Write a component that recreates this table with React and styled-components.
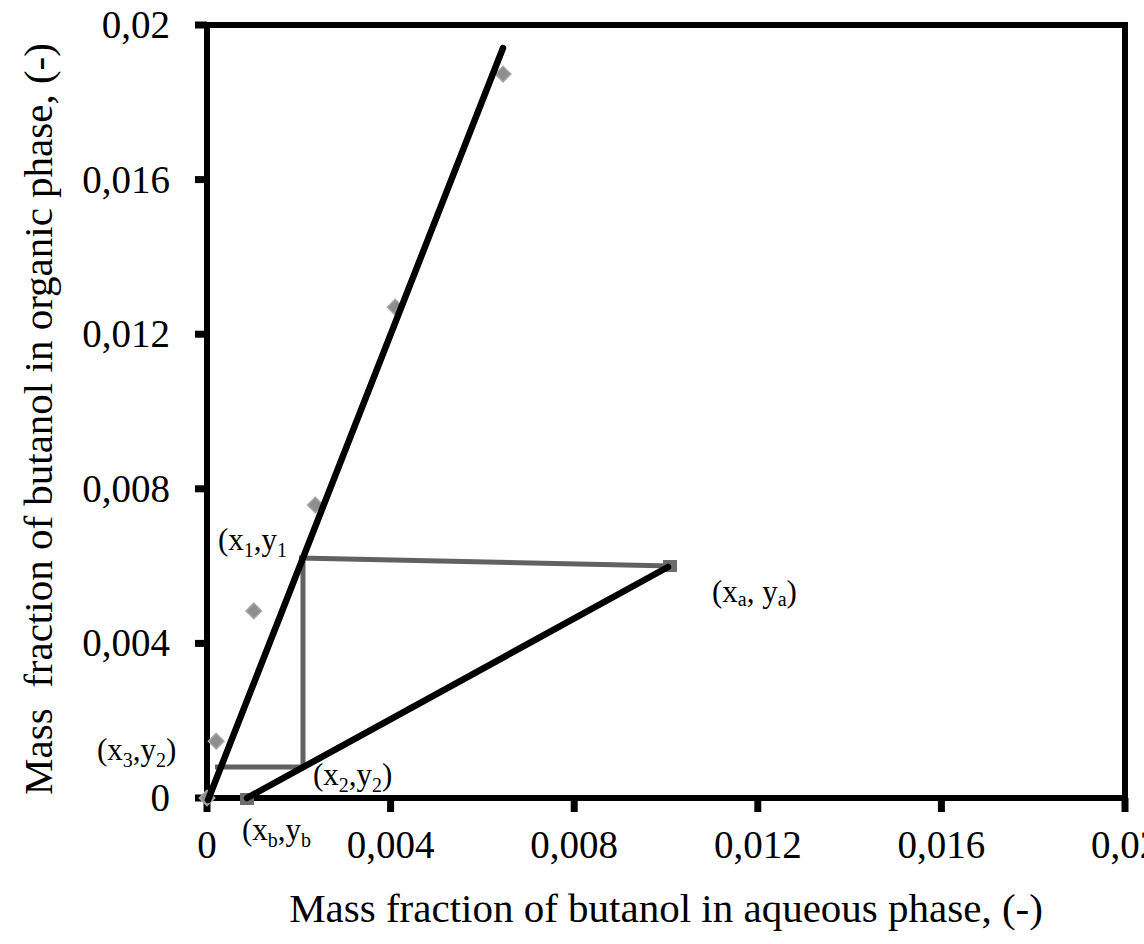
import React from 'react';
import styled, { createGlobalStyle } from 'styled-components';

const GlobalStyle = createGlobalStyle`
  html, body {
    margin: 0;
    padding: 0;
    background: #ffffff;
  }
`;

const SERIF = '"Liberation Serif", "Times New Roman", serif';

const Figure = styled.div`
  width: 1144px;
  height: 944px;
  overflow: hidden;
  background: #fff;
`;

const Chart = styled.svg`
  display: block;
  font-family: ${SERIF};
`;

const TickLabel = styled.text`
  font-family: ${SERIF};
  font-size: 39px;
  fill: #000;
`;

const AxisTitle = styled.text`
  font-family: ${SERIF};
  font-size: 41px;
  fill: #000;
  white-space: pre;
`;

const Note = styled.text`
  font-family: ${SERIF};
  font-size: 31px;
  fill: #000;
`;

const Sub = styled.tspan`
  font-size: 20px;
`;

const Stroke = styled.line`
  stroke: ${(p) => p.$color || '#000'};
  stroke-width: ${(p) => p.$w || 6}px;
  stroke-linecap: ${(p) => p.$cap || 'butt'};
`;

// plot frame in px
const LEFT = 207;
const RIGHT = 1125;
const TOP = 25;
const BOTTOM = 798;

const X = (v) => LEFT + (v / 0.02) * (RIGHT - LEFT);
const Y = (v) => BOTTOM - (v / 0.02) * (BOTTOM - TOP);

const ticks = [0, 0.004, 0.008, 0.012, 0.016, 0.02];
const fmt = (v) => (v === 0 ? '0' : String(v).replace('.', ','));

const points = [
  [0, 0],
  [0.0002, 0.00147],
  [0.00102, 0.00484],
  [0.00236, 0.00758],
  [0.0041, 0.0127],
  [0.00645, 0.01873],
];

const Diamond = ({ x, y }) => (
  <rect
    x={x - 5.5}
    y={y - 5.5}
    width={11}
    height={11}
    fill="#8e8e8e"
    stroke="#a6a6a6"
    strokeWidth={1.5}
    transform={`rotate(45 ${x} ${y})`}
  />
);

const Square = ({ x, y }) => (
  <rect x={x - 7} y={y - 6} width={14} height={12} fill="#6c6c6c" />
);

const Label = ({ x, y, a, b, close }) => (
  <Note x={x} y={y}>
    (x<Sub dy={7}>{a}</Sub>
    <tspan dy={-7}>,y</tspan>
    <Sub dy={7}>{b}</Sub>
    {close && <tspan dy={-7}>)</tspan>}
  </Note>
);

export default function App() {
  return (
    <Figure>
      <GlobalStyle />
      <Chart width="1144" height="944" viewBox="0 0 1144 944">
        {/* frame */}
        <rect x={LEFT} y={TOP} width={RIGHT - LEFT} height={BOTTOM - TOP} fill="none" stroke="#000" strokeWidth={6} />

        {/* ticks */}
        {ticks.map((t) => (
          <Stroke key={'y' + t} x1={195} x2={LEFT} y1={Y(t)} y2={Y(t)} $w={7} />
        ))}
        {ticks.map((t) => (
          <Stroke key={'x' + t} x1={X(t)} x2={X(t)} y1={BOTTOM} y2={812} $w={7} />
        ))}

        {ticks.map((t) => (
          <TickLabel key={'yl' + t} x={170} y={Y(t) + 13} textAnchor="end">
            {fmt(t)}
          </TickLabel>
        ))}
        {ticks.map((t) => (
          <TickLabel key={'xl' + t} x={X(t)} y={858} textAnchor="middle">
            {fmt(t)}
          </TickLabel>
        ))}

        <AxisTitle x={(LEFT + RIGHT) / 2} y={922} textAnchor="middle">
          Mass fraction of butanol in aqueous phase, (-)
        </AxisTitle>
        <AxisTitle transform="translate(52 419) rotate(-90)" textAnchor="middle">
          {'Mass  fraction of butanol in organic phase, (-)'}
        </AxisTitle>

        {/* stage steps */}
        <Stroke x1={299} y1={558} x2={672} y2={566} $color="#616161" $w={5} />
        <Stroke x1={303} y1={558} x2={303} y2={770} $color="#616161" $w={5} />
        <Stroke x1={215} y1={767} x2={305} y2={767} $color="#616161" $w={5} />

        {points.map(([px, py]) => (
          <Diamond key={px} x={X(px)} y={Y(py)} />
        ))}
        <Square x={247} y={799} />
        <Square x={670} y={566} />

        {/* equilibrium + operating lines */}
        <Stroke x1={208} y1={800} x2={503} y2={48} $w={6.5} $cap="round" />
        <Stroke x1={247} y1={798} x2={668} y2={567} $w={6.5} $cap="round" />

        <Label x={218} y={550} a="1" b="1" />
        <Label x={97} y={760} a="3" b="2" close />
        <Label x={313} y={785} a="2" b="2" close />
        <Label x={242} y={840} a="b" b="b" />
        <Note x={712} y={602}>
          (x<Sub dy={4}>a</Sub>
          <tspan dy={-4}>, y</tspan>
          <Sub dy={4}>a</Sub>
          <tspan dy={-4}>)</tspan>
        </Note>
      </Chart>
    </Figure>
  );
}
